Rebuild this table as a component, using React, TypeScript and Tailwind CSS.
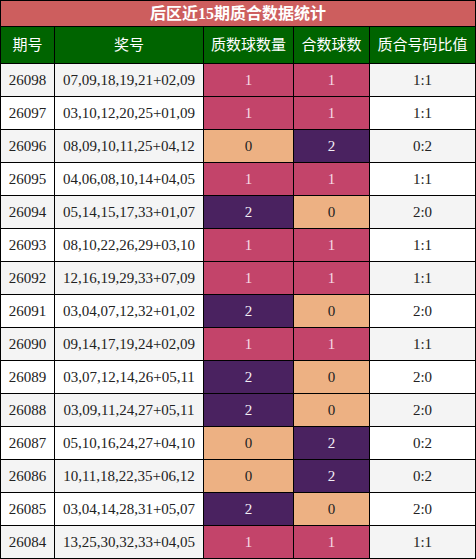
const rows: [string, string, number, number][] = [
  ['26098', '07,09,18,19,21+02,09', 1, 1],
  ['26097', '03,10,12,20,25+01,09', 1, 1],
  ['26096', '08,09,10,11,25+04,12', 0, 2],
  ['26095', '04,06,08,10,14+04,05', 1, 1],
  ['26094', '05,14,15,17,33+01,07', 2, 0],
  ['26093', '08,10,22,26,29+03,10', 1, 1],
  ['26092', '12,16,19,29,33+07,09', 1, 1],
  ['26091', '03,04,07,12,32+01,02', 2, 0],
  ['26090', '09,14,17,19,24+02,09', 1, 1],
  ['26089', '03,07,12,14,26+05,11', 2, 0],
  ['26088', '03,09,11,24,27+05,11', 2, 0],
  ['26087', '05,10,16,24,27+04,10', 0, 2],
  ['26086', '10,11,18,22,35+06,12', 0, 2],
  ['26085', '03,04,14,28,31+05,07', 2, 0],
  ['26084', '13,25,30,32,33+04,05', 1, 1],
]

const countCell: Record<number, string> = {
  0: 'bg-[#edb183] text-[#222]',
  1: 'bg-[#c3446a] text-[#f6dce4]',
  2: 'bg-[#4a2260] text-[#f2eef5]',
}

export default function App() {
  const headers = ['期号', '奖号', '质数球数量', '合数球数', '质合号码比值']

  return (
    <div
      className="w-[476px] grid grid-cols-[53px_148px_89px_75px_105px] grid-rows-[25px_36px] auto-rows-[32px] gap-px p-px bg-black text-[15px]"
      style={{ fontFamily: '"Liberation Serif", "Noto Sans CJK SC", serif' }}
    >
      <div className="col-span-5 bg-[#cd5e5e] text-white font-bold text-[16px] flex items-center justify-center">
        后区近15期质合数据统计
      </div>
      {headers.map((h) => (
        <div key={h} className="bg-[#006400] text-white flex items-center justify-center">
          {h}
        </div>
      ))}
      {rows.map(([issue, nums, prime, comp], i) => {
        const bg = i % 2 === 0 ? 'bg-[#f4f4f4]' : 'bg-white'
        return [
          <div key={issue + 'a'} className={`${bg} text-[#222] flex items-center justify-center`}>{issue}</div>,
          <div key={issue + 'b'} className={`${bg} text-[#222] flex items-center justify-center`}>{nums}</div>,
          <div key={issue + 'c'} className={`${countCell[prime]} flex items-center justify-center`}>{prime}</div>,
          <div key={issue + 'd'} className={`${countCell[comp]} flex items-center justify-center`}>{comp}</div>,
          <div key={issue + 'e'} className={`${bg} text-[#222] flex items-center justify-center`}>
            {prime}:{comp}
          </div>,
        ]
      })}
    </div>
  )
}
